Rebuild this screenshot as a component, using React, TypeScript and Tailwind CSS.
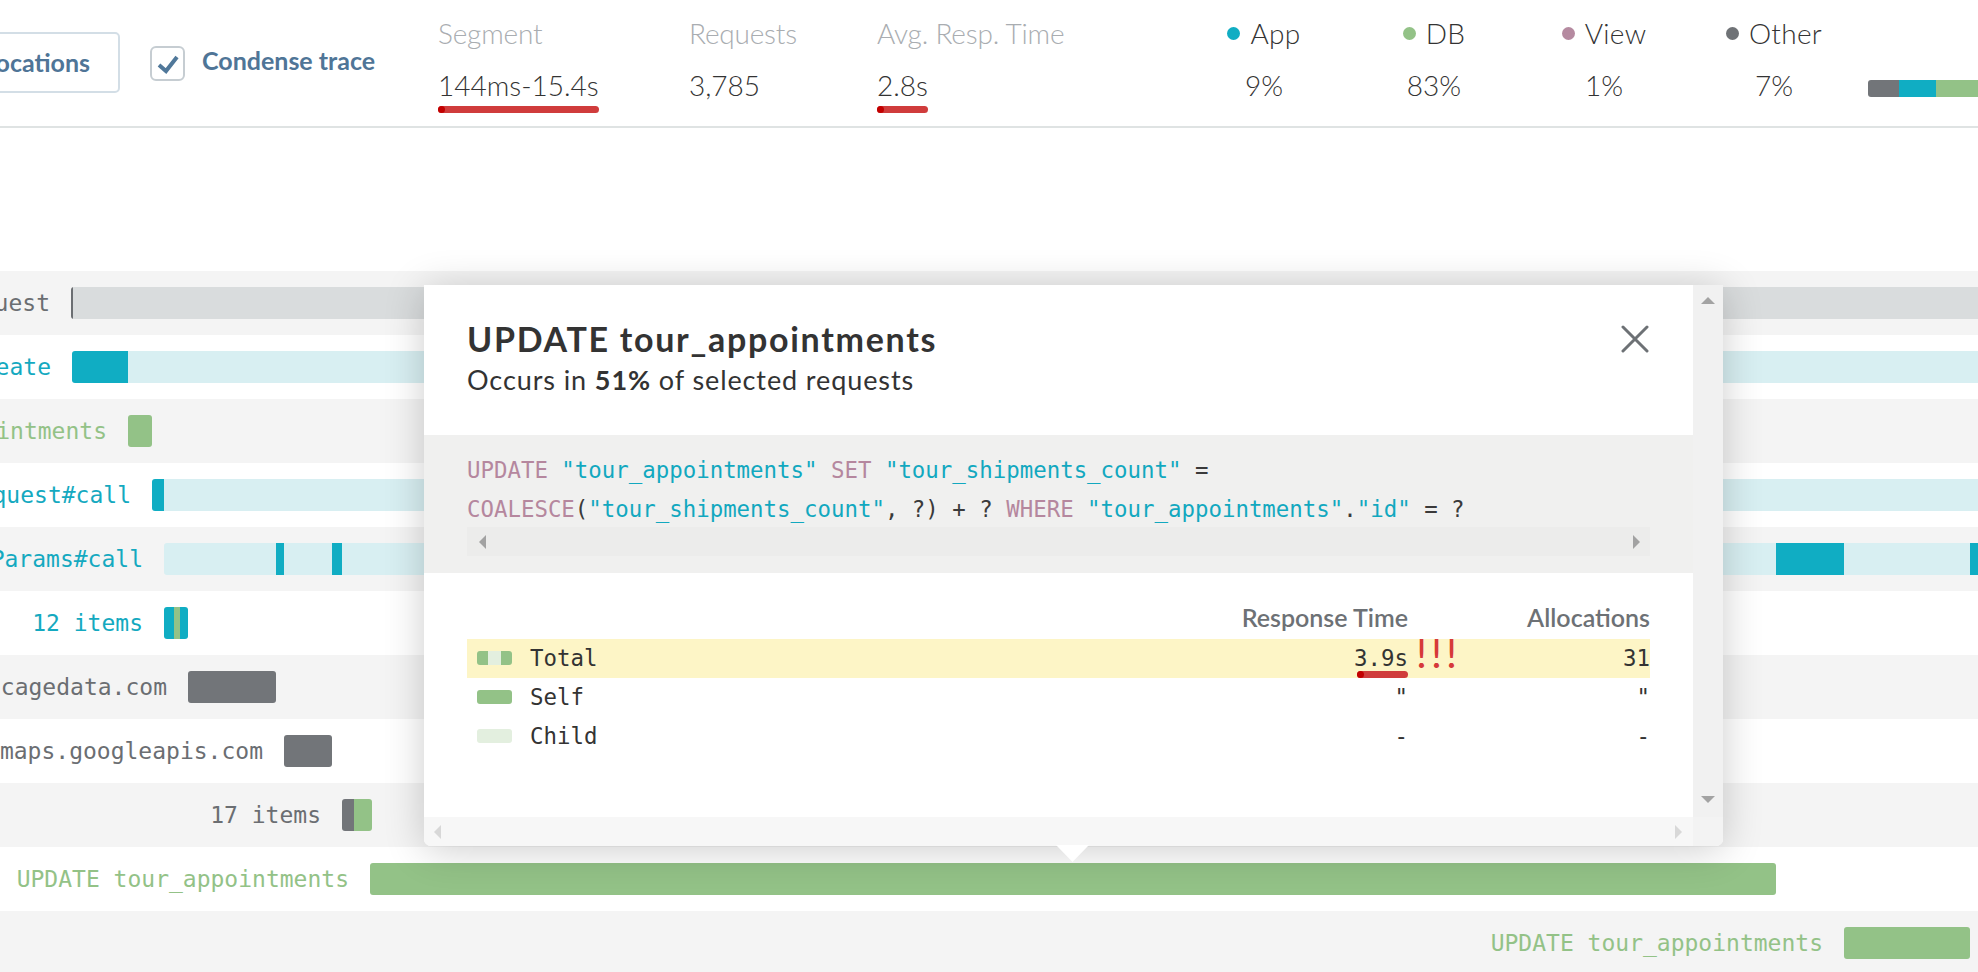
import React from 'react';

const TEAL = 'bg-[#10adc3]';
const TEAL_LIGHT = 'bg-[#d8eff2]';
const GREEN = 'bg-[#93c287]';
const SLATE = 'bg-[#727579]';

type Seg = { w: number; cls: string };
type TraceRow = { label: string; text: string; start: number; segs: Seg[] };

const rows: TraceRow[] = [
  { label: 'Request', text: 'text-[#6b6e72]', start: 71, segs: [{ w: 2, cls: 'bg-[#6b6e72]' }, { w: 1910, cls: 'bg-[#d9dcdd]' }] },
  { label: 'TourAppointmentsController#create', text: 'text-[#14a9c0]', start: 72, segs: [{ w: 56, cls: TEAL }, { w: 1860, cls: TEAL_LIGHT }] },
  { label: 'SELECT tour_appointments', text: 'text-[#93c287]', start: 128, segs: [{ w: 24, cls: GREEN }] },
  { label: 'Rack::Request#call', text: 'text-[#14a9c0]', start: 152, segs: [{ w: 12, cls: TEAL }, { w: 1830, cls: TEAL_LIGHT }] },
  {
    label: 'ActionDispatch::Params#call',
    text: 'text-[#14a9c0]',
    start: 164,
    segs: [
      { w: 112, cls: TEAL_LIGHT },
      { w: 8, cls: TEAL },
      { w: 48, cls: TEAL_LIGHT },
      { w: 10, cls: TEAL },
      { w: 1434, cls: TEAL_LIGHT },
      { w: 68, cls: TEAL },
      { w: 126, cls: TEAL_LIGHT },
      { w: 20, cls: TEAL },
    ],
  },
  { label: '12 items', text: 'text-[#14a9c0]', start: 164, segs: [{ w: 10, cls: TEAL }, { w: 6, cls: GREEN }, { w: 8, cls: TEAL }] },
  { label: 'api.opencagedata.com', text: 'text-[#6b6e72]', start: 188, segs: [{ w: 88, cls: SLATE }] },
  { label: 'maps.googleapis.com', text: 'text-[#6b6e72]', start: 284, segs: [{ w: 48, cls: SLATE }] },
  { label: '17 items', text: 'text-[#6b6e72]', start: 342, segs: [{ w: 12, cls: SLATE }, { w: 18, cls: GREEN }] },
  { label: 'UPDATE tour_appointments', text: 'text-[#93c287]', start: 370, segs: [{ w: 1406, cls: GREEN }] },
  { label: 'UPDATE tour_appointments', text: 'text-[#93c287]', start: 1844, segs: [{ w: 126, cls: GREEN }] },
];

const legend = [
  { name: 'App', pct: '9%', dot: 'bg-[#10adc3]' },
  { name: 'DB', pct: '83%', dot: 'bg-[#93c287]' },
  { name: 'View', pct: '1%', dot: 'bg-[#b58aa0]' },
  { name: 'Other', pct: '7%', dot: 'bg-[#6f7276]' },
];

function RedMark() {
  return (
    <div className="flex h-[7px] w-full rounded-full bg-[#d03c3c]">
      <div className="h-[7px] w-[7px] rounded-full bg-[#c20000]" />
    </div>
  );
}

function Metric({ label, value, mark, width }: { label: string; value: string; mark?: boolean; width: string }) {
  return (
    <div className={`${width} shrink-0 pt-[19px]`}>
      <div className="text-[28px] leading-none font-light tracking-[-0.2px] text-[#a9adb1]">{label}</div>
      <div className="mt-[24px] inline-flex flex-col">
        <span className="text-[28px] leading-none font-light text-[#333]">{value}</span>
        {mark && (
          <div className="mt-[7px]">
            <RedMark />
          </div>
        )}
      </div>
    </div>
  );
}

function Header() {
  return (
    <div className="flex h-[128px] shrink-0 border-b-2 border-[#dfe3e3] font-['Lato',sans-serif]">
      <div className="flex w-[438px] shrink-0 items-start">
        <div className="-ml-[100px] mt-[32px] flex h-[61px] w-[220px] shrink-0 items-center justify-end rounded-[5px] border-2 border-[#d3dee6] pr-[28px] text-[25px] font-bold text-[#4f7597]">
          Allocations
        </div>
        <div className="ml-[30px] mt-[46px] flex h-[35px] w-[35px] shrink-0 items-center justify-center rounded-[6px] border-2 border-[#c6cdd2]">
          <svg width="24" height="20" viewBox="0 0 24 20">
            <path d="M3 11 L10 17 L21 3" fill="none" stroke="#50789a" strokeWidth="4" />
          </svg>
        </div>
        <div className="ml-[17px] mt-[48px] text-[25px] leading-none font-bold text-[#4f7597] whitespace-nowrap">Condense trace</div>
      </div>
      <Metric width="w-[251px]" label="Segment" value="144ms-15.4s" mark />
      <Metric width="w-[188px]" label="Requests" value="3,785" />
      <Metric width="w-[302px]" label="Avg. Resp. Time" value="2.8s" mark />
      {legend.map((l) => (
        <div key={l.name} className="flex w-[170px] shrink-0 flex-col items-center pt-[19px]">
          <div className="flex items-center gap-[10px]">
            <span className={`h-[13px] w-[13px] rounded-full ${l.dot}`} />
            <span className="text-[28px] leading-none font-light tracking-[0.3px] text-[#333]">{l.name}</span>
          </div>
          <div className="mt-[24px] text-[28px] leading-none font-light text-[#333]">{l.pct}</div>
        </div>
      ))}
      <div className="ml-[9px] mt-[80px] flex h-[17px] shrink-0 overflow-hidden rounded-l-[3px]">
        <div className="w-[31px] bg-[#727579]" />
        <div className="w-[37px] bg-[#10adc3]" />
        <div className="w-[80px] bg-[#93c287]" />
      </div>
    </div>
  );
}

function Row({ row, shaded }: { row: TraceRow; shaded: boolean }) {
  return (
    <div className={`flex h-16 shrink-0 items-center overflow-hidden ${shaded ? 'bg-[#f4f4f4]' : 'bg-white'}`}>
      <div className="flex shrink-0 justify-end pr-[21px]" style={{ width: row.start }}>
        <span className={`shrink-0 whitespace-nowrap text-[23px] leading-none ${row.text}`}>{row.label}</span>
      </div>
      <div className="flex h-8 shrink-0 overflow-hidden rounded-[3px]">
        {row.segs.map((s, i) => (
          <div key={i} className={`h-8 shrink-0 ${s.cls}`} style={{ width: s.w }} />
        ))}
      </div>
    </div>
  );
}

const K = 'text-[#b5879e]';
const S = 'text-[#12a8bf]';
const D = 'text-[#3a3a3a]';

function Tri({ dir, color }: { dir: 'up' | 'down' | 'left' | 'right'; color: string }) {
  const pts = {
    up: '0,7 7,0 14,7',
    down: '0,0 14,0 7,7',
    left: '7,0 7,14 0,7',
    right: '0,0 0,14 7,7',
  }[dir];
  const vert = dir === 'up' || dir === 'down';
  return (
    <svg width={vert ? 14 : 7} height={vert ? 7 : 14} viewBox={vert ? '0 0 14 7' : '0 0 7 14'}>
      <polygon points={pts} fill={color} />
    </svg>
  );
}

function Popover() {
  return (
    <div className="absolute left-[424px] top-[285px] flex h-[561px] w-[1299px] flex-col rounded-b-[7px] bg-white shadow-[0_4px_40px_rgba(0,0,0,0.2)]">
      <div className="flex min-h-0 flex-1">
        <div className="flex w-[1269px] flex-col">
          <div className="flex h-[150px] shrink-0 items-start justify-between pl-[43px] pr-[44px] pt-[37px] font-['Lato',sans-serif]">
            <div>
              <div className="text-[34px] leading-none font-bold tracking-[1.7px] text-[#333]">UPDATE tour_appointments</div>
              <div className="mt-[10px] text-[27px] leading-none tracking-[0.9px] text-[#333]">
                Occurs in <span className="font-bold">51%</span> of selected requests
              </div>
            </div>
            <svg width="28" height="28" viewBox="0 0 28 28" className="mt-[3px]">
              <path d="M2 2 L26 26 M26 2 L2 26" stroke="#6d7175" strokeWidth="3" strokeLinecap="round" />
            </svg>
          </div>
          <div className="flex h-[138px] shrink-0 flex-col bg-[#f0f0ef] px-[43px] pt-[16px] font-['DejaVu_Sans_Mono',monospace] text-[22.4px] leading-[39px] whitespace-pre">
            <div>
              <span className={K}>UPDATE</span>
              <span className={S}> "tour_appointments"</span>
              <span className={K}> SET</span>
              <span className={S}> "tour_shipments_count"</span>
              <span className={D}> =</span>
            </div>
            <div>
              <span className={K}>COALESCE</span>
              <span className={D}>(</span>
              <span className={S}>"tour_shipments_count"</span>
              <span className={D}>, ?) + ? </span>
              <span className={K}>WHERE</span>
              <span className={S}> "tour_appointments"</span>
              <span className={D}>.</span>
              <span className={S}>"id"</span>
              <span className={D}> = ?</span>
            </div>
            <div className="-mt-[2px] flex h-[29px] items-center justify-between bg-[#ececeb] pl-[12px] pr-[10px]">
              <Tri dir="left" color="#a2a2a2" />
              <Tri dir="right" color="#a2a2a2" />
            </div>
          </div>
          <div className="flex-1 px-[43px] pt-[32px]">
            <div className="grid grid-cols-[1fr_200px_242px] font-['Lato',sans-serif] text-[25px] leading-none font-semibold text-[#6d7175]">
              <div />
              <div className="text-right">Response Time</div>
              <div className="text-right">Allocations</div>
            </div>
            <div className="mt-[9px] font-['DejaVu_Sans_Mono',monospace] text-[22.4px] text-[#333]">
              <div className="grid h-[39px] grid-cols-[1fr_200px_242px] items-center bg-[#fdf5c6]">
                <div className="flex items-center">
                  <div className="ml-[10px] flex h-[14px] w-[35px] overflow-hidden rounded-[3px]">
                    <div className="w-[11px] bg-[#93c287]" />
                    <div className="w-[13px] bg-[#e3efdf]" />
                    <div className="w-[11px] bg-[#93c287]" />
                  </div>
                  <span className="ml-[18px]">Total</span>
                </div>
                <div className="relative text-right">
                  <span className="relative inline-block">
                    3.9s
                    <span className="absolute left-[3px] right-0 top-[29px] block">
                      <RedMark />
                    </span>
                  </span>
                  <span className="absolute left-full top-[-10px] pl-[8px] font-['Lato',sans-serif] text-[41px] leading-none tracking-[4px] text-[#d63a3a]">!!!</span>
                </div>
                <div className="text-right">31</div>
              </div>
              <div className="grid h-[39px] grid-cols-[1fr_200px_242px] items-center">
                <div className="flex items-center">
                  <div className="ml-[10px] h-[14px] w-[35px] rounded-[3px] bg-[#93c287]" />
                  <span className="ml-[18px]">Self</span>
                </div>
                <div className="text-right">"</div>
                <div className="text-right">"</div>
              </div>
              <div className="grid h-[39px] grid-cols-[1fr_200px_242px] items-center">
                <div className="flex items-center">
                  <div className="ml-[10px] h-[14px] w-[35px] rounded-[3px] bg-[#e3efdf]" />
                  <span className="ml-[18px]">Child</span>
                </div>
                <div className="text-right">-</div>
                <div className="text-right">-</div>
              </div>
            </div>
          </div>
        </div>
        <div className="flex w-[30px] flex-col items-center justify-between bg-[#f1f1f1] pb-[14px] pt-[12px]">
          <Tri dir="up" color="#a3a3a3" />
          <Tri dir="down" color="#a3a3a3" />
        </div>
      </div>
      <div className="flex h-[29px] shrink-0">
        <div className="flex w-[1269px] items-center justify-between rounded-bl-[7px] bg-[#f7f7f7] pl-[10px] pr-[11px]">
          <Tri dir="left" color="#d8d8d8" />
          <Tri dir="right" color="#d8d8d8" />
        </div>
        <div className="w-[30px] rounded-br-[7px] bg-[#f3f3f3]" />
      </div>
      <svg width="33" height="17" viewBox="0 0 33 17" className="absolute left-[632px] top-[560px]">
        <polygon points="0,0 33,0 16.5,17" fill="#ffffff" />
      </svg>
    </div>
  );
}

export default function App() {
  return (
    <div className="relative flex h-[972px] w-[1978px] flex-col overflow-hidden bg-white">
      <Header />
      <div className="h-[143px] shrink-0" />
      <div className="flex flex-col font-['DejaVu_Sans_Mono',monospace]">
        {rows.map((r, i) => (
          <Row key={i} row={r} shaded={i % 2 === 0} />
        ))}
      </div>
      <Popover />
    </div>
  );
}
